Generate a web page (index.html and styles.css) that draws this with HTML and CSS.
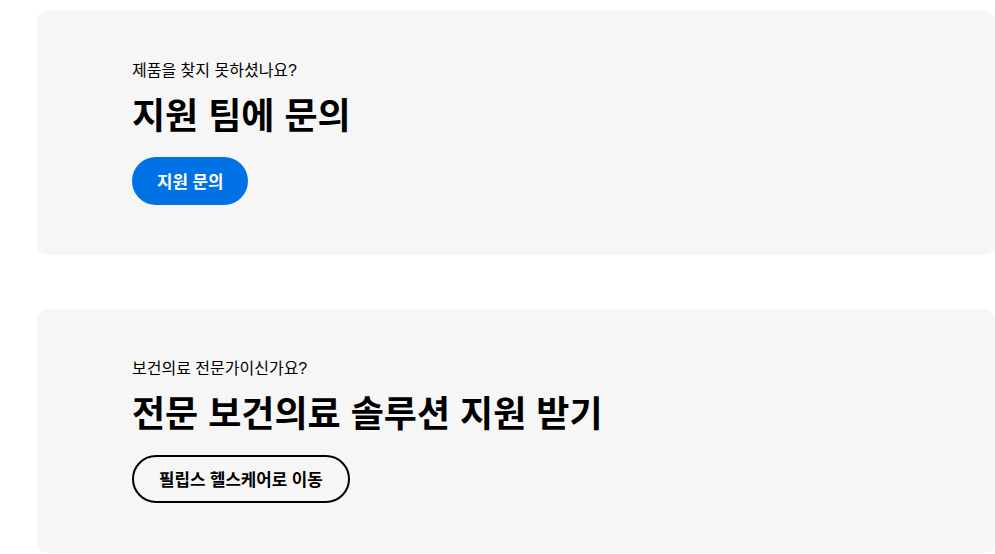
FILE: index.html
```html
<!DOCTYPE html>
<html lang="ko">
  <head>
    <meta charset="UTF-8" />
    <title>지원</title>
    <link rel="stylesheet" href="styles.css">
  </head>
  <body>
    <div class="page">
      <section class="card">
        <p class="eyebrow">제품을 찾지 못하셨나요?</p>
        <h2 class="title">지원 팀에 문의</h2>
        <a class="btn btn-primary" href="#">지원 문의</a>
      </section>

      <section class="card">
        <p class="eyebrow">보건의료 전문가이신가요?</p>
        <h2 class="title">전문 보건의료 솔루션 지원 받기</h2>
        <a class="btn btn-outline" href="#">필립스 헬스케어로 이동</a>
      </section>
    </div>
  </body>
</html>
```

FILE: styles.css
```css
body {
  margin: 0;
  font-family: "Liberation Sans", "Noto Sans CJK KR", sans-serif;
  background-color: #fff;
  color: #000;
  overflow: hidden;
}

.page {
  display: flex;
  flex-direction: column;
  gap: 54px;
  padding: 11px 0 0 37px;
}

.card {
  display: flex;
  flex-direction: column;
  align-items: flex-start;
  height: 244px;
  box-sizing: border-box;
  padding: 50px 0 0 95px;
  background-color: #f6f6f6;
  border-radius: 10px;
}

.eyebrow {
  margin: 0 0 16px;
  font-size: 16px;
  line-height: 20px;
}

.title {
  margin: 0 0 20px;
  font-size: 36px;
  line-height: 40px;
  font-weight: bold;
}

.btn {
  display: inline-flex;
  align-items: center;
  height: 48px;
  box-sizing: border-box;
  padding: 0 25px;
  border-radius: 24px;
  font-size: 16.8px;
  font-weight: bold;
  text-decoration: none;
}

.btn-primary {
  background-color: #0072e5;
  color: #fff;
}

.btn-outline {
  border: 2px solid #000;
  color: #000;
}
```
